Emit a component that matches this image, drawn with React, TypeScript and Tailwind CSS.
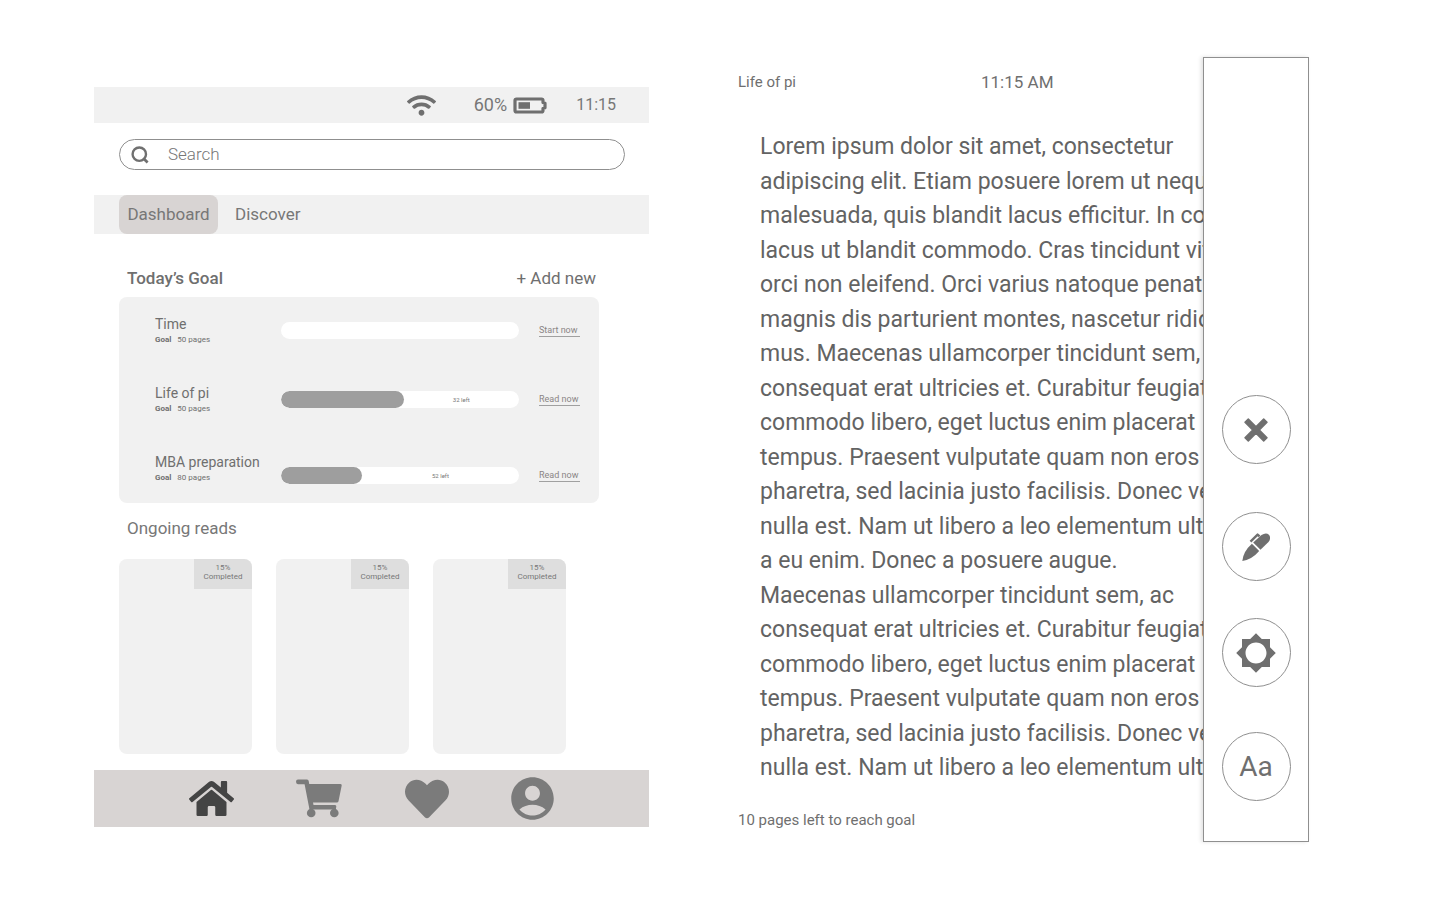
import React from "react";
import { FaHeart, FaHome, FaWifi } from "react-icons/fa";
import { MdAccountCircle, MdBrightness5 } from "react-icons/md";

type Goal = {
  title: string;
  pages: number;
  percent: number;
  left?: string;
  action: string;
  align: string;
};

const goals: Goal[] = [
  { title: "Time", pages: 50, percent: 0, action: "Start now", align: "items-center" },
  { title: "Life of pi", pages: 50, percent: 51.5, left: "32 left", action: "Read now", align: "items-center" },
  { title: "MBA preparation", pages: 80, percent: 34, left: "52 left", action: "Read now", align: "items-end" },
];

const firstParagraph = [
  "Lorem ipsum dolor sit amet, consectetur",
  "adipiscing elit. Etiam posuere lorem ut nequ",
  "malesuada, quis blandit lacus efficitur. In co",
  "lacus ut blandit commodo. Cras tincidunt vit",
  "orci non eleifend. Orci varius natoque penati",
  "magnis dis parturient montes, nascetur ridic",
  "mus. Maecenas ullamcorper tincidunt sem,",
  "consequat erat ultricies et. Curabitur feugiat",
  "commodo libero, eget luctus enim placerat",
  "tempus. Praesent vulputate quam non eros",
  "pharetra, sed lacinia justo facilisis. Donec ve",
  "nulla est. Nam ut libero a leo elementum ult",
  "a eu enim. Donec a posuere augue.",
];

const secondParagraph = [
  "Maecenas ullamcorper tincidunt sem, ac",
  "consequat erat ultricies et. Curabitur feugiat",
  "commodo libero, eget luctus enim placerat",
  "tempus. Praesent vulputate quam non eros",
  "pharetra, sed lacinia justo facilisis. Donec ve",
  "nulla est. Nam ut libero a leo elementum ult",
];

function BatteryIcon() {
  return (
    <svg width="34" height="17" viewBox="0 0 34 17" aria-hidden="true">
      <path
        d="M3.500 2h25q1.500 0 1.500 1.500V5.500l2 .8v4.400l-2 .8v2q0 1.500-1.500 1.500h-25Q2 15 2 13.500v-10Q2 2 3.500 2z"
        fill="none"
        stroke="#6f6f6f"
        strokeWidth="3.200"
        strokeLinejoin="round"
      />
      <rect x="5.500" y="5.200" width="11.500" height="6.600" fill="#6f6f6f" />
    </svg>
  );
}

function SearchIcon() {
  return (
    <svg width="18" height="18" viewBox="0 0 18 18" fill="none" stroke="#707070" strokeWidth="2.400" aria-hidden="true">
      <circle cx="8.300" cy="8.200" r="6.700" />
      <path d="M12.300 12.300l4.300 4.200" strokeWidth="2.800" />
    </svg>
  );
}

function CartIcon() {
  return (
    <svg width="46" height="39" viewBox="0 0 46 39" fill="#7b7b7b" aria-hidden="true">
      <path d="M2 .5h9q1.500 0 1.700 1.500l.5 2.900H44.500q1.500 0 1.200 1.500l-3.200 15.800q-.3 1.400-1.700 1.400H17l.5 2.500h21.500q1.500 0 1.300 1.500l-.5 3H13.500L8.600 5.200H2Q0 5.200 0 2.850T2 .5z" />
      <circle cx="15.200" cy="34" r="4.300" />
      <circle cx="38.300" cy="34" r="4.300" />
    </svg>
  );
}

function CloseIcon() {
  return (
    <svg width="26" height="26" viewBox="0 0 26 26" stroke="#6f6f6f" fill="#6f6f6f" strokeWidth="1.500" strokeLinejoin="round" aria-hidden="true">
      <path d="M5.300 2L13 9.700 20.700 2 24 5.300 16.300 13 24 20.700 20.700 24 13 16.300 5.300 24 2 20.700 9.700 13 2 5.300z" />
    </svg>
  );
}

function PenIcon() {
  return (
    <svg width="28" height="28" viewBox="0 0 28 28" fill="#6f6f6f" aria-hidden="true">
      <path d="M11.200 9.600L19.500 2Q24-1 26.900 1.700 29.500 5 26.500 9L18.500 16.800z" />
      <path d="M9.900 10.800L17.200 18Q10 26.500 .3 28 1.200 18.500 9.900 10.800z" />
      <path d="M8.500 8.600L15.600 1.600l2 1.700" fill="none" stroke="#6f6f6f" strokeWidth="2.400" strokeLinejoin="round" />
    </svg>
  );
}

function StatusBar() {
  return (
    <div className="flex h-9 items-center justify-end bg-[#f1f1f1] pr-[33px] text-[#777777]">
      <FaWifi size={29} color="#6f6f6f" aria-label="Wi-Fi" />
      <span className="ml-[38px] mr-1.5 text-lg">60%</span>
      <BatteryIcon />
      <span className="ml-[29px] text-base">11:15</span>
    </div>
  );
}

function GoalRow({ goal }: { goal: Goal }) {
  return (
    <li className={`flex ${goal.align}`}>
      <div className="w-[126px] shrink-0 whitespace-nowrap text-[#6f6f6f]">
        <h3 className="text-[14px] leading-5">{goal.title}</h3>
        <p className="text-[8px] leading-3">
          <b className="mr-1">Goal</b> {goal.pages} pages
        </p>
      </div>
      <div className="flex flex-1 items-center">
        <div
          role="progressbar"
          aria-label={goal.title}
          aria-valuenow={goal.percent}
          className="flex h-[17px] flex-1 overflow-hidden rounded-full bg-white"
        >
          <div className="rounded-full bg-[#9e9e9e]" style={{ width: `${goal.percent}%` }} />
          <span className="flex-1 text-center text-[6px] leading-[17px] text-[#777777]">{goal.left}</span>
        </div>
        <a href="#read" className="ml-5 w-[41px] whitespace-nowrap border-b border-[#a0a0a0] text-[9px] leading-3 text-[#8a8585]">
          {goal.action}
        </a>
      </div>
    </li>
  );
}

function BookCard() {
  return (
    <article className="flex h-[195px] w-[133px] items-start justify-end overflow-hidden rounded-lg bg-[#f1f1f1]">
      <p className="h-[30px] w-[58px] bg-[#dedede] pt-1 text-center text-[8px] leading-[9px] text-[#777777]">
        15%
        <br />
        Completed
      </p>
    </article>
  );
}

function Dashboard() {
  return (
    <section className="mt-[30px] self-start">
      <StatusBar />
      <label className="ml-[25px] mr-6 mt-4 flex h-[31px] items-center rounded-full border border-[#8f8f8f] pl-[11px]">
        <SearchIcon />
        <input
          type="search"
          aria-label="Search"
          placeholder="Search"
          className="ml-[19px] min-w-0 flex-1 bg-transparent text-[17px] font-light text-[#777777] outline-none placeholder:text-[#777777]"
        />
      </label>
      <div className="mt-[25px] flex h-[39px] bg-[#f1f1f1] pl-[25px] text-[17px] text-[#777777]">
        <button className="w-[99px] rounded-lg bg-[#d8d4d3]">Dashboard</button>
        <button className="ml-[17px]">Discover</button>
      </div>
      <div className="ml-[25px] mr-[50px]">
        <div className="mt-[30px] flex h-[33px] items-start justify-between pl-2 pr-[3px] text-[17px] leading-7 text-[#6f6f6f]">
          <h2 className="font-medium">Today’s Goal</h2>
          <button>+ Add new</button>
        </div>
        <ul className="flex flex-col gap-[37px] rounded-lg bg-[#f1f1f1] pb-[19px] pl-9 pr-[19px] pt-[17px]">
          {goals.map((goal) => (
            <GoalRow key={goal.title} goal={goal} />
          ))}
        </ul>
        <h2 className="mt-[11px] h-[45px] pl-2 text-[17px] leading-7 text-[#777777]">Ongoing reads</h2>
        <div className="flex gap-6">
          <BookCard />
          <BookCard />
          <BookCard />
        </div>
      </div>
      <nav className="mt-4 flex h-[57px] items-center justify-between bg-[#d8d4d3] px-[95px] text-[#7b7b7b]">
        <a href="#home" aria-label="Home"><FaHome size={45} color="#444444" /></a>
        <a href="#shop" aria-label="Shop"><CartIcon /></a>
        <a href="#favourites" aria-label="Favourites"><FaHeart size={44} /></a>
        <a href="#account" aria-label="Account" className="-mx-1"><MdAccountCircle size={51} /></a>
      </nav>
    </section>
  );
}

function Paragraph({ lines }: { lines: string[] }) {
  return (
    <p>
      {lines.map((line) => (
        <span key={line} className="block">{line}</span>
      ))}
    </p>
  );
}

const toolClass = "flex size-[69px] items-center justify-center rounded-full border border-[#8f8f8f]";

function Reader() {
  return (
    <section className="flex min-w-0">
      <div className="min-w-0 flex-1 overflow-hidden whitespace-nowrap text-[#6f6f6f]">
        <header className="grid h-[73px] grid-cols-[243px_1fr] items-start pt-[11px] leading-7">
          <span className="text-[15px]">Life of pi</span>
          <span className="text-[17px]">11:15 AM</span>
        </header>
        <div className="pl-[22px] text-[23px] leading-normal text-[#636363]">
          <Paragraph lines={firstParagraph} />
          <Paragraph lines={secondParagraph} />
        </div>
        <footer className="pt-6 text-[15px] leading-5">10 pages left to reach goal</footer>
      </div>
      <aside className="relative flex w-[106px] shrink-0 flex-col items-center justify-end border border-[#8f8f8f] bg-white pb-10 shadow-[-2px_0px_4px_rgba(0,0,0,0.12)]">
        <button aria-label="Close" className={toolClass}><CloseIcon /></button>
        <button aria-label="Annotate" className={`mt-12 ${toolClass}`}><PenIcon /></button>
        <button aria-label="Brightness" className={`mt-[37px] ${toolClass}`}><MdBrightness5 size={42} color="#6f6f6f" /></button>
        <button aria-label="Text size" className={`mt-[45px] text-[28px] text-[#6f6f6f] ${toolClass}`}>Aa</button>
      </aside>
    </section>
  );
}

export default function App() {
  return (
    <main className="grid min-h-screen grid-cols-[555fr_571fr] gap-x-[89px] bg-white pb-[58px] pl-[94px] pr-[131px] pt-[57px] font-['Roboto',sans-serif]">
      <Dashboard />
      <Reader />
    </main>
  );
}
